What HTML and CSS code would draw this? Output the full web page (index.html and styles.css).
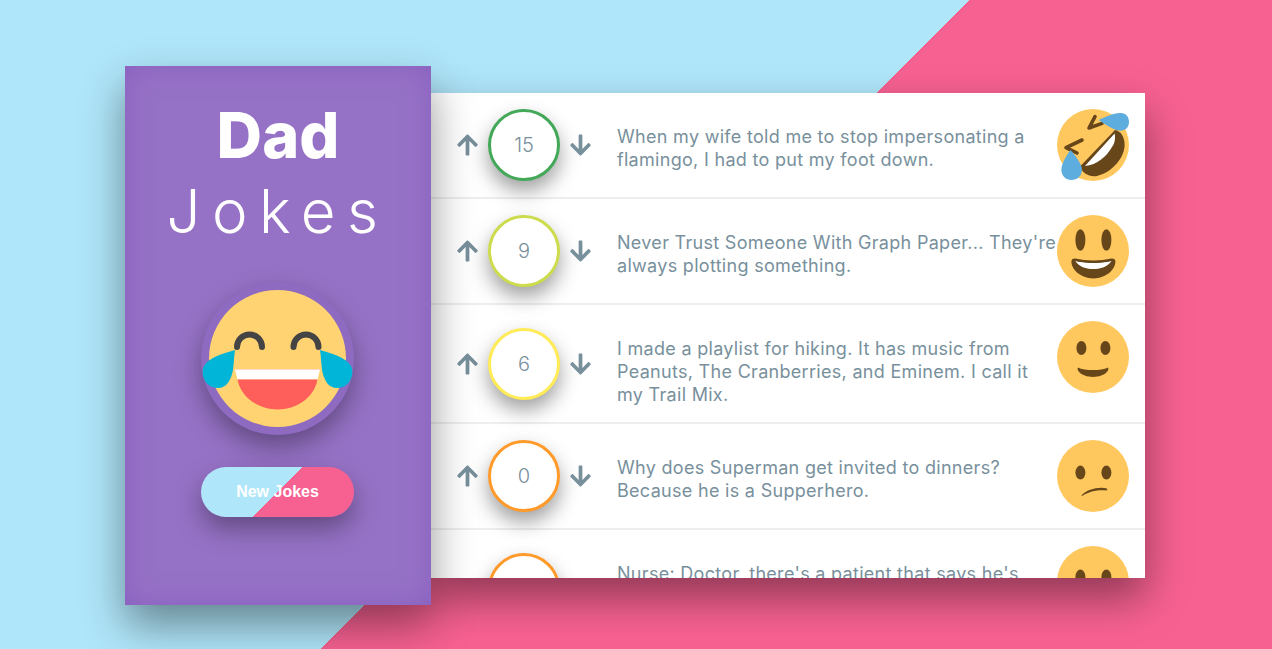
FILE: index.html
```html
<!doctype html>
<html lang="en">
 <head>
  <title>Dad Jokes</title>
  <link rel="stylesheet" href="styles.css">
 </head>
 <body>
 <div id="container">
  <aside class="sidebar">
   <h1 class="title"><span class="title-dad">Dad</span> <span class="title-jokes">Jokes</span></h1>
   <svg class="big-emoji" viewBox="0 0 153 153">
    <circle cx="76.5" cy="76.5" r="68.5" fill="#ffd372"/>
    <path d="M36 65a12.5 12.5 0 0 1 25 0M92.500 65a12.500 12.500 0 0 1 25 0" fill="none" stroke="#444" stroke-width="6" stroke-linecap="round"/>
    <path d="M34 87.500H119L116.500 97.500H36.500Z" fill="#fff"/>
    <path d="M34 87H119V88H34Z" fill="#ffd8c8"/>
    <path d="M36.500 97.500C40 116 58 127.500 76.500 127.500S113 116 116.500 97.500Z" fill="#ff5f5a"/>
    <path d="M34 68C24 71 8 75 3 84C-1 92 4 106 17 106C26 106 30 98 32 88C33 80 33 74 34 68Z" fill="#00b5d8"/>
    <path d="M119 68C129 71 145 75 150 84C154 92 149 106 136 106C127 106 123 98 121 88C120 80 120 74 119 68Z" fill="#00b5d8"/>
   </svg>
   <button class="new-jokes">New Jokes</button>
  </aside>
  <main class="jokes">

   <div class="joke">
    <div class="votes">
     <svg class="arrow" viewBox="0 0 448 512"><path d="M34.900 289.500l-22.200-22.200c-9.400-9.400-9.400-24.600 0-33.900L207 39c9.400-9.400 24.600-9.400 33.900 0l194.300 194.300c9.400 9.400 9.400 24.600 0 33.900L413 289.400c-9.500 9.500-25 9.300-34.300-.4L264 168.600V456c0 13.300-10.700 24-24 24h-32c-13.300 0-24-10.700-24-24V168.600L69.200 289.100c-9.300 9.800-24.800 10-34.300.4z"/></svg>
     <span class="score score-green">15</span>
     <svg class="arrow" viewBox="0 0 448 512"><path d="M413.100 222.500l22.200 22.200c9.400 9.400 9.400 24.600 0 33.900L241 473c-9.400 9.400-24.600 9.400-33.900 0L12.700 278.600c-9.400-9.400-9.400-24.600 0-33.900l22.200-22.200c9.500-9.500 25-9.300 34.300.4L184 343.400V56c0-13.300 10.700-24 24-24h32c13.300 0 24 10.700 24 24v287.400l114.800-120.500c9.300-9.800 24.800-10 34.300-.4z"/></svg>
    </div>
    <div class="joke-text">When my wife told me to stop impersonating a flamingo, I had to put my foot down.</div>
    <svg class="emoji" viewBox="0 0 36 36">
     <circle cx="18" cy="18" r="18" fill="#ffc85e"/>
     <path d="M11.500 28.800L29 10.500C32 11 33.800 14 33.800 18C33.800 24 28 31.500 20 33.500C16 34.200 12.500 32 11.500 28.800Z" fill="#67461a"/>
     <path d="M14 28.500L28.800 12.300C29.500 15 28.500 18 27.500 19C25 23.500 20 28 14 28.500Z" fill="#fff"/>
     <path d="M19 3.800L16 9.500L22.500 7.200M12.500 15.500L4.500 19.300L10 22" fill="none" stroke="#67461a" stroke-width="1.800" stroke-linecap="round" stroke-linejoin="round"/>
     <path d="M20.800 5.500C24 4 28 2.200 31.500 2C34.500 1.800 36 4 36 6.500C36 9.500 33.500 11.200 31 10.800C27.500 10.200 24 7.500 20.800 5.500Z" fill="#5dadde"/>
     <path d="M6.700 20.500C8.500 22.500 12.500 27 12.500 30.500C12.500 33.500 10 35.500 7.300 35.500C4.500 35.500 2.200 33.500 2.200 30.500C2.200 27 5 23 6.700 20.500Z" fill="#5dadde"/>
    </svg>
   </div>

   <div class="joke">
    <div class="votes">
     <svg class="arrow" viewBox="0 0 448 512"><path d="M34.900 289.500l-22.200-22.200c-9.400-9.400-9.400-24.600 0-33.900L207 39c9.400-9.400 24.600-9.400 33.900 0l194.300 194.300c9.400 9.400 9.400 24.600 0 33.900L413 289.400c-9.500 9.500-25 9.300-34.300-.4L264 168.600V456c0 13.300-10.700 24-24 24h-32c-13.300 0-24-10.700-24-24V168.600L69.200 289.100c-9.300 9.800-24.800 10-34.300.4z"/></svg>
     <span class="score score-lime">9</span>
     <svg class="arrow" viewBox="0 0 448 512"><path d="M413.100 222.500l22.200 22.200c9.400 9.400 9.400 24.600 0 33.900L241 473c-9.400 9.400-24.600 9.400-33.900 0L12.700 278.600c-9.400-9.400-9.400-24.600 0-33.900l22.200-22.200c9.500-9.500 25-9.300 34.300.4L184 343.400V56c0-13.300 10.700-24 24-24h32c13.300 0 24 10.700 24 24v287.400l114.800-120.500c9.300-9.800 24.800-10 34.300-.4z"/></svg>
    </div>
    <div class="joke-text">Never Trust Someone With Graph Paper... They're always plotting something.</div>
    <svg class="emoji" viewBox="0 0 36 36">
     <circle cx="18" cy="18" r="18" fill="#ffc85e"/>
     <ellipse cx="11.700" cy="12.500" rx="2.500" ry="5.400" fill="#67461a"/>
     <ellipse cx="24.700" cy="12.500" rx="2.500" ry="5.400" fill="#67461a"/>
     <path d="M18.200 22.800c-3.600 0-6-.4-9-1-.7-.1-2 0-2 1.500 0 4 4.600 8.400 11 8.400s11-4.400 11-8.400c0-1.500-1.300-1.600-2-1.500-3 .6-5.400 1-9 1z" fill="#67461a"/>
     <path d="M9.200 23s3 1 9 1 9-1 9-1-2 4-9 4-9-4-9-4z" fill="#fff"/>
    </svg>
   </div>

   <div class="joke">
    <div class="votes">
     <svg class="arrow" viewBox="0 0 448 512"><path d="M34.900 289.500l-22.200-22.200c-9.400-9.400-9.400-24.600 0-33.900L207 39c9.400-9.400 24.600-9.400 33.900 0l194.300 194.300c9.400 9.400 9.400 24.600 0 33.900L413 289.400c-9.500 9.500-25 9.300-34.300-.4L264 168.600V456c0 13.300-10.700 24-24 24h-32c-13.300 0-24-10.700-24-24V168.600L69.200 289.100c-9.300 9.800-24.800 10-34.300.4z"/></svg>
     <span class="score score-yellow">6</span>
     <svg class="arrow" viewBox="0 0 448 512"><path d="M413.100 222.500l22.200 22.200c9.400 9.400 9.400 24.600 0 33.900L241 473c-9.400 9.400-24.600 9.400-33.900 0L12.700 278.600c-9.400-9.400-9.400-24.600 0-33.900l22.200-22.200c9.500-9.500 25-9.300 34.300.4L184 343.400V56c0-13.300 10.700-24 24-24h32c13.300 0 24 10.700 24 24v287.400l114.800-120.500c9.300-9.800 24.800-10 34.300-.4z"/></svg>
    </div>
    <div class="joke-text">I made a playlist for hiking. It has music from Peanuts, The Cranberries, and Eminem. I call it my Trail Mix.</div>
    <svg class="emoji" viewBox="0 0 36 36">
     <circle cx="18" cy="18" r="18" fill="#ffc85e"/>
     <ellipse cx="12.200" cy="13.500" rx="2.500" ry="3.500" fill="#67461a"/>
     <ellipse cx="24.200" cy="13.500" rx="2.500" ry="3.500" fill="#67461a"/>
     <path d="M10.500 23.200C14 25 22 25 25.500 23.200C26 24 25.500 24.800 25 25.400C22.500 28.800 13.500 28.800 11 25.400C10.500 24.800 10 24 10.500 23.200Z" fill="#67461a"/>
    </svg>
   </div>

   <div class="joke">
    <div class="votes">
     <svg class="arrow" viewBox="0 0 448 512"><path d="M34.900 289.500l-22.200-22.200c-9.400-9.400-9.400-24.600 0-33.900L207 39c9.400-9.400 24.600-9.400 33.900 0l194.300 194.300c9.400 9.400 9.400 24.600 0 33.900L413 289.400c-9.500 9.500-25 9.300-34.300-.4L264 168.600V456c0 13.300-10.700 24-24 24h-32c-13.300 0-24-10.700-24-24V168.600L69.200 289.100c-9.300 9.800-24.800 10-34.300.4z"/></svg>
     <span class="score score-orange">0</span>
     <svg class="arrow" viewBox="0 0 448 512"><path d="M413.100 222.500l22.200 22.200c9.400 9.400 9.400 24.600 0 33.900L241 473c-9.400 9.400-24.600 9.400-33.900 0L12.700 278.600c-9.400-9.400-9.400-24.600 0-33.900l22.200-22.200c9.500-9.500 25-9.300 34.300.4L184 343.400V56c0-13.300 10.700-24 24-24h32c13.300 0 24 10.700 24 24v287.400l114.800-120.500c9.300-9.800 24.800-10 34.300-.4z"/></svg>
    </div>
    <div class="joke-text">Why does Superman get invited to dinners? Because he is a Supperhero.</div>
    <svg class="emoji" viewBox="0 0 36 36">
     <circle cx="18" cy="18" r="18" fill="#ffc85e"/>
     <ellipse cx="11.700" cy="16.300" rx="2.500" ry="3.500" fill="#67461a"/>
     <ellipse cx="24.700" cy="16.300" rx="2.500" ry="3.500" fill="#67461a"/>
     <path d="M12.200 27.800C15 24.500 21 23.200 25 24.200C25.300 24.800 25 25.200 24.500 25.200C21 24.800 16 25.500 12.600 28Z" fill="#67461a"/>
    </svg>
   </div>

   <div class="joke">
    <div class="votes">
     <svg class="arrow" viewBox="0 0 448 512"><path d="M34.900 289.500l-22.200-22.200c-9.400-9.400-9.400-24.600 0-33.900L207 39c9.400-9.400 24.600-9.400 33.900 0l194.300 194.300c9.400 9.400 9.400 24.600 0 33.900L413 289.400c-9.500 9.500-25 9.300-34.300-.4L264 168.600V456c0 13.300-10.700 24-24 24h-32c-13.300 0-24-10.700-24-24V168.600L69.200 289.100c-9.300 9.800-24.800 10-34.300.4z"/></svg>
     <span class="score score-orange">1</span>
     <svg class="arrow" viewBox="0 0 448 512"><path d="M413.100 222.500l22.200 22.200c9.400 9.400 9.400 24.600 0 33.900L241 473c-9.400 9.400-24.600 9.400-33.900 0L12.700 278.600c-9.400-9.400-9.400-24.600 0-33.900l22.200-22.200c9.500-9.500 25-9.300 34.300.4L184 343.400V56c0-13.300 10.700-24 24-24h32c13.300 0 24 10.700 24 24v287.400l114.800-120.500c9.300-9.800 24.800-10 34.300-.4z"/></svg>
    </div>
    <div class="joke-text">Nurse: Doctor, there's a patient that says he's invisible. Doctor: Well, tell him I can't see him right now.</div>
    <svg class="emoji" viewBox="0 0 36 36">
     <circle cx="18" cy="18" r="18" fill="#ffc85e"/>
     <ellipse cx="11.700" cy="15.300" rx="2.500" ry="3.500" fill="#67461a"/>
     <ellipse cx="24.700" cy="15.300" rx="2.500" ry="3.500" fill="#67461a"/>
    </svg>
   </div>

  </main>
 </div>
 </body>
</html>
```
FILE: styles.css
```css
html {
    overflow: hidden;
}

body {
    margin: 0;
    height: 671px;
    display: flex;
    align-items: center;
    justify-content: center;
    background: linear-gradient(135deg, #b0e6fa 49.9%, #f76192 49.9%);
    font-family: Inter, "Noto Sans", sans-serif;
}

#container {
    width: 1020px;
    height: 485px;
    margin-right: 2px;
    display: flex;
    align-items: center;
}

.sidebar {
    position: relative;
    z-index: 1;
    width: 306px;
    height: 539px;
    flex-shrink: 0;
    display: flex;
    flex-direction: column;
    align-items: center;
    background-color: #9672c6;
    box-shadow: inset 0 0 28px rgba(125, 80, 185, 0.55), 0 20px 40px rgba(0, 0, 0, 0.42);
}

.title {
    margin: 0;
    padding-top: 32px;
    color: #fff;
    text-align: center;
    line-height: 1;
}

.title-dad {
    display: block;
    font-size: 63px;
    font-weight: 800;
    line-height: 74px;
}

.title-jokes {
    display: block;
    font-size: 60px;
    font-weight: 280;
    letter-spacing: 11.500px;
    line-height: 78px;
}

.big-emoji {
    width: 153px;
    height: 153px;
    margin: 32px 1px 0 0;
    flex-shrink: 0;
    overflow: visible;
    border-radius: 50%;
    background: #8e6ac0;
    box-shadow: 0 12px 26px rgba(0, 0, 0, 0.35);
}

.new-jokes {
    width: 153px;
    height: 50px;
    margin: 32px 1px 0 0;
    border: 0;
    border-radius: 25px;
    background: linear-gradient(135deg, #b0e6fa 50%, #f76192 50%);
    box-shadow: 0 12px 26px rgba(0, 0, 0, 0.35);
    color: #fff;
    font-family: "Liberation Sans", sans-serif;
    font-size: 16px;
    font-weight: 700;
}

.jokes {
    flex: 1;
    height: 485px;
    overflow: hidden;
    background-color: #fff;
    box-shadow: 0 20px 40px rgba(0, 0, 0, 0.42);
}

.joke {
    display: flex;
    align-items: flex-start;
    padding: 16px;
    border-bottom: 2px solid #eee;
}

.votes {
    width: 154px;
    flex-shrink: 0;
    align-self: center;
    display: flex;
    align-items: center;
    justify-content: center;
    gap: 10px;
}

.arrow {
    width: 21px;
    height: 24px;
    fill: #78909c;
}

.score {
    width: 72px;
    height: 72px;
    box-sizing: border-box;
    display: flex;
    align-items: center;
    justify-content: center;
    border: 3.500px solid;
    border-radius: 50%;
    background-color: #fff;
    box-shadow: 0 10px 20px rgba(0, 0, 0, 0.38);
    color: #78909c;
    font-size: 20px;
    font-weight: 280;
}

.score-green { border-color: #43a857; }
.score-lime { border-color: #cddc4d; }
.score-yellow { border-color: #ffeb55; }
.score-orange { border-color: #ff9a2b; }

.joke-text {
    width: 440px;
    margin-left: 16px;
    padding-top: 16px;
    color: #78909c;
    font-size: 18px;
    letter-spacing: 0.300px;
    line-height: 23px;
}

.emoji {
    width: 72px;
    height: 72px;
    flex-shrink: 0;
}
```
